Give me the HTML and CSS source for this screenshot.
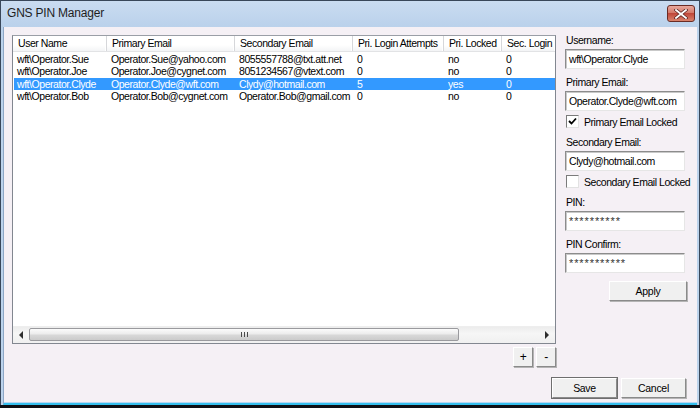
FILE: index.html
```html
<!DOCTYPE html>
<html lang="en">
<head>
    <meta charset="UTF-8">
    <meta name="viewport" content="width=device-width, initial-scale=1.0">
    <link rel="stylesheet" href="styles.css">
    <title>GNS PIN Manager</title>
</head>
<body>

<div class="window">
    <div class="titlebar">
        <span class="title">GNS PIN Manager</span>
        <div class="close-btn">
            <svg width="14" height="10" viewBox="0 0 14 10">
                <path d="M2 1 L12 9 M12 1 L2 9" stroke="#5a2420" stroke-width="3.4" stroke-linecap="square"/>
                <path d="M2 1 L12 9 M12 1 L2 9" stroke="#ffffff" stroke-width="1.8" stroke-linecap="square"/>
            </svg>
        </div>
    </div>

    <div class="client">
        <div class="listview">
            <div class="list-body">
                <div class="list-header">
                    <div class="col-head">User Name</div>
                    <div class="col-head">Primary Email</div>
                    <div class="col-head">Secondary Email</div>
                    <div class="col-head">Pri. Login Attempts</div>
                    <div class="col-head">Pri. Locked</div>
                    <div class="col-head">Sec. Login</div>
                </div>
                <div class="list-rows">
                    <div class="list-row">
                        <span>wft\Operator.Sue</span><span>Operator.Sue@yahoo.com</span><span>8055557788@txt.att.net</span><span>0</span><span>no</span><span>0</span>
                    </div>
                    <div class="list-row">
                        <span>wft\Operator.Joe</span><span>Operator.Joe@cygnet.com</span><span>8051234567@vtext.com</span><span>0</span><span>no</span><span>0</span>
                    </div>
                    <div class="list-row selected">
                        <span>wft\Operator.Clyde</span><span>Operator.Clyde@wft.com</span><span>Clydy@hotmail.com</span><span>5</span><span>yes</span><span>0</span>
                    </div>
                    <div class="list-row">
                        <span>wft\Operator.Bob</span><span>Operator.Bob@cygnet.com</span><span>Operator.Bob@gmail.com</span><span>0</span><span>no</span><span>0</span>
                    </div>
                </div>
            </div>
            <div class="hscroll">
                <div class="scroll-arrow"><span class="tri-left"></span></div>
                <div class="scroll-track">
                    <div class="scroll-thumb"><span class="grip"></span></div>
                </div>
                <div class="scroll-arrow"><span class="tri-right"></span></div>
            </div>
        </div>

        <div class="panel">
            <div class="field">
                <div class="field-label">Username:</div>
                <div class="textbox">wft\Operator.Clyde</div>
            </div>
            <div class="field">
                <div class="field-label">Primary Email:</div>
                <div class="textbox">Operator.Clyde@wft.com</div>
            </div>
            <label class="check-row">
                <span class="checkbox">
                    <svg width="9" height="9" viewBox="0 0 9 9"><path d="M1 4 L3.5 6.5 L8 1.5" fill="none" stroke="#000" stroke-width="1.8"/></svg>
                </span>
                Primary Email Locked
            </label>
            <div class="field">
                <div class="field-label">Secondary Email:</div>
                <div class="textbox">Clydy@hotmail.com</div>
            </div>
            <label class="check-row">
                <span class="checkbox"></span>
                Secondary Email Locked
            </label>
            <div class="field">
                <div class="field-label">PIN:</div>
                <div class="textbox pin">**********</div>
            </div>
            <div class="field">
                <div class="field-label">PIN Confirm:</div>
                <div class="textbox pin">***********</div>
            </div>
            <div class="apply-row">
                <button class="btn apply">Apply</button>
            </div>
        </div>

        <div class="list-tools">
            <button class="btn small">+</button>
            <button class="btn small">-</button>
        </div>

        <div class="dialog-buttons">
            <button class="btn default">Save</button>
            <button class="btn">Cancel</button>
        </div>
    </div>
</div>

</body>
</html>
```

FILE: styles.css
```css
body {
    margin: 0;
    width: 700px;
    height: 408px;
    background: #0d0f14;
    font-family: "Liberation Sans", Arial, sans-serif;
    font-size: 10.5px;
    letter-spacing: -0.45px;
    color: #000;
    overflow: hidden;
}

.window {
    height: 405px;
    display: flex;
    flex-direction: column;
    background: #bcd3ec;
    border: 1px solid #39475a;
    border-bottom: 0;
    padding: 0 2px;
    box-sizing: border-box;
}

.titlebar {
    height: 24px;
    display: flex;
    align-items: center;
    justify-content: space-between;
    background: linear-gradient(#cadcf1, #bad1eb);
    margin: 0 -2px;
    padding: 0 4px 2px 6px;
}

.title {
    font-size: 12px;
    color: #1e1e1e;
    letter-spacing: -0.2px;
}

.close-btn {
    width: 26px;
    height: 15px;
    margin-top: 1px;
    border: 1px solid #6a2b24;
    border-radius: 3px;
    background: linear-gradient(#e8a99e, #d47a6a 45%, #c0483a 50%, #d9826c);
    display: flex;
    align-items: center;
    justify-content: center;
}

.client {
    flex: 1;
    display: grid;
    grid-template-columns: 544px 122px;
    grid-template-rows: 309px auto auto;
    column-gap: 9px;
    align-content: start;
    padding: 8px 0 0 8px;
    background: #f5f0f5;
    border-left: 1px solid #8ea7c6;
    border-bottom: 2px solid #34bfee;
    box-shadow: inset 0 -1px 0 #b7d6f2;
}

/* list view */

.listview {
    grid-column: 1;
    grid-row: 1;
    display: flex;
    flex-direction: column;
    background: #fff;
    border: 1px solid #828790;
    border-top-color: #9a9ea6;
    overflow: hidden;
}

.list-body {
    flex: 1;
    overflow: hidden;
}

.list-header,
.list-row {
    display: grid;
    grid-template-columns: 94px 128px 118px 91px 58px 53px;
}

.list-header {
    height: 15px;
    background: linear-gradient(#ffffff 60%, #f3f4f6);
    border-bottom: 1px solid #e2e3e5;
}

.col-head {
    line-height: 14px;
    padding-left: 5px;
    border-right: 1px solid #d6d7da;
    box-shadow: inset -1px 0 0 #fff;
    white-space: nowrap;
}

.col-head:last-child {
    border-right: 0;
}

.list-rows {
    padding-top: 1px;
}

.list-row {
    height: 12.4px;
    line-height: 12.4px;
    margin-left: 1px;
}

.list-row span {
    padding-left: 3px;
    white-space: nowrap;
}

.list-row.selected {
    background: #3399ff;
    color: #fff;
}

.hscroll {
    height: 16px;
    display: flex;
    background: linear-gradient(#ececec, #f6f6f6 40%, #f0f0f0);
    border-top: 1px solid #eeeeee;
}

.scroll-arrow {
    width: 16px;
    display: flex;
    align-items: center;
    justify-content: center;
}

.tri-left {
    border-right: 4px solid #2e2e2e;
    border-top: 4px solid transparent;
    border-bottom: 4px solid transparent;
}

.tri-right {
    border-left: 4px solid #2e2e2e;
    border-top: 4px solid transparent;
    border-bottom: 4px solid transparent;
}

.scroll-track {
    flex: 1;
    padding: 1px 0;
}

.scroll-thumb {
    width: 430px;
    height: 13px;
    border: 1px solid #9a9a9e;
    border-radius: 2px;
    background: linear-gradient(#fbfbfb, #ececec 45%, #d8d8d8 55%, #cbcbcb);
    box-sizing: border-box;
    display: flex;
    align-items: center;
    justify-content: center;
}

.grip {
    width: 7px;
    height: 5px;
    background: repeating-linear-gradient(90deg, #4a4a4a 0 1px, transparent 1px 3px);
}

/* edit panel */

.panel {
    grid-column: 2;
    grid-row: 1 / span 2;
    display: flex;
    flex-direction: column;
    margin-top: -1px;
}

.field {
    margin-top: 7px;
}

.field:first-child {
    margin-top: 0;
}

.field-label {
    line-height: 13px;
    margin-bottom: 2px;
    padding-left: 1px;
}

.textbox {
    width: 120px;
    height: 20px;
    line-height: 18px;
    padding-left: 3px;
    box-sizing: border-box;
    background: #fff;
    border: 1px solid #e6e6e6;
    border-top-color: #8c8c8c;
    border-left-color: #8c8c8c;
    box-shadow: inset 1px 1px 0 #c9c9c9;
    white-space: nowrap;
}

.textbox.pin {
    font-size: 11px;
    letter-spacing: 0.9px;
    line-height: 19px;
    color: #333;
}

.check-row {
    display: flex;
    align-items: center;
    gap: 5px;
    height: 15px;
    margin-top: 3px;
    padding-left: 1px;
    white-space: nowrap;
}

.checkbox {
    flex: none;
    width: 11px;
    height: 11px;
    background: #fff;
    border: 1px solid #e2e2e2;
    border-top-color: #7b7b7b;
    border-left-color: #7b7b7b;
    display: flex;
    align-items: center;
    justify-content: center;
}

.apply-row {
    display: flex;
    justify-content: flex-end;
    margin-top: 8px;
}

/* buttons */

.btn {
    height: 20px;
    width: 65px;
    padding: 0;
    font-family: inherit;
    font-size: 10.5px;
    letter-spacing: -0.3px;
    color: #000;
    background: #f0f0f0;
    border: 1px solid;
    border-color: #fff #8a8a8a #8a8a8a #fff;
    box-shadow: 1px 1px 0 #b4b4b4;
}

.btn.apply {
    width: 78px;
}

.btn.default {
    outline: 1px solid #6e6e6e;
}

.btn.small {
    width: 20px;
    font-size: 12px;
}

.list-tools {
    grid-column: 1;
    grid-row: 2;
    display: flex;
    justify-content: flex-end;
    gap: 3px;
    margin-top: 3px;
}

.dialog-buttons {
    grid-column: 1 / -1;
    grid-row: 3;
    display: flex;
    justify-content: flex-end;
    gap: 4px;
    margin-top: 11px;
    padding-right: 1px;
}
```
